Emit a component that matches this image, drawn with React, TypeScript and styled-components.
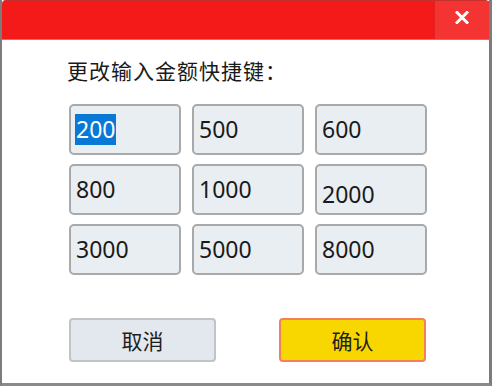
import React from 'react';
import styled, { createGlobalStyle } from 'styled-components';

const GlobalStyle = createGlobalStyle`
  html, body {
    margin: 0;
    padding: 0;
    background: #ffffff;
  }
  * {
    box-sizing: border-box;
  }
`;

const AMOUNTS = ['200', '500', '600', '800', '1000', '2000', '3000', '5000', '8000'];

const Window = styled.div`
  width: 492px;
  height: 386px;
  display: flex;
  flex-direction: column;
  background: #ffffff;
  border-left: 2px solid #7c7c7c;
  border-right: 3px solid #7c7c7c;
  border-bottom: 3px solid #8a8a8a;
  font-family: 'Noto Sans', 'Noto Sans CJK SC', sans-serif;
  color: #1e1e1e;
`;

const TitleBar = styled.div`
  height: 40px;
  display: flex;
  justify-content: flex-end;
  background: #f41a1a;
  border-top: 1px solid #c83030;
  border-bottom: 1px solid #8c8c8c;
  border-radius: 4px 4px 0 0;
`;

const CloseButton = styled.div`
  width: 55px;
  display: flex;
  align-items: center;
  justify-content: center;
  background: #f43333;
  border-left: 1px solid #e32020;
  padding-bottom: 6px;
`;

const Body = styled.div`
  flex: 1;
  padding: 16px 0 0 65px;
  display: flex;
  flex-direction: column;
`;

const Heading = styled.div`
  font-family: 'Noto Sans CJK SC', sans-serif;
  font-size: 21px;
  line-height: 28px;
  letter-spacing: 1px;
  color: #1a1a1a;
`;

const Grid = styled.div`
  margin: 20px 0 0 2px;
  display: grid;
  grid-template-columns: repeat(3, 112px);
  grid-auto-rows: 51px;
  column-gap: 11px;
  row-gap: 9px;
`;

const Cell = styled.div<{ $drop?: boolean }>`
  display: flex;
  align-items: center;
  padding: ${(props) => (props.$drop ? '9px' : '0')} 4px 0 4px;
  background: #e9eef2;
  border: 2px solid #a9a9a9;
  border-radius: 5px;
  font-size: 23px;
`;

const Value = styled.span<{ $selected?: boolean }>`
  line-height: 31px;
  padding: 0 1px;
  background: ${(props) => (props.$selected ? '#0a78d7' : 'transparent')};
  color: ${(props) => (props.$selected ? '#ffffff' : '#1a1a1a')};
`;

const Footer = styled.div`
  width: 357px;
  margin: 43px 0 0 2px;
  display: flex;
  justify-content: space-between;
`;

const ActionButton = styled.div<{ $primary?: boolean }>`
  width: 147px;
  height: 44px;
  display: flex;
  align-items: center;
  justify-content: center;
  border-radius: 4px;
  font-family: 'Noto Sans CJK SC', sans-serif;
  font-size: 21px;
  color: #1e1e1e;
  background: ${(props) => (props.$primary ? '#f8d700' : '#e2e8ed')};
  border: 2px solid ${(props) => (props.$primary ? '#f2805a' : '#c0c4c8')};
`;

const CloseIcon = () => (
  <svg width="14" height="13" viewBox="0 0 14 13">
    <path d="M2 1.5 L12 11.5 M12 1.5 L2 11.5" stroke="#ffffff" strokeWidth="3" strokeLinecap="square" />
  </svg>
);

const App: React.FC = function () {
  return (
    <>
      <GlobalStyle />
      <Window>
        <TitleBar>
          <CloseButton>
            <CloseIcon />
          </CloseButton>
        </TitleBar>
        <Body>
          <Heading>更改输入金额快捷键：</Heading>
          <Grid>
            {AMOUNTS.map((amount, i) => (
              <Cell key={amount} $drop={amount === '2000'}>
                <Value $selected={i === 0}>{amount}</Value>
              </Cell>
            ))}
          </Grid>
          <Footer>
            <ActionButton>取消</ActionButton>
            <ActionButton $primary>确认</ActionButton>
          </Footer>
        </Body>
      </Window>
    </>
  );
};

export default App;
